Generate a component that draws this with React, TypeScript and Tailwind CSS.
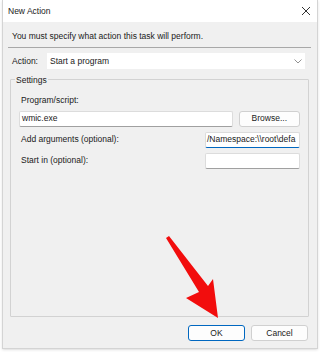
import React from 'react';

function Arrow() {
  return (
    <svg className="absolute left-0 top-0 pointer-events-none" width="320" height="352" viewBox="0 0 320 352">
      <polygon
        points="166,238 169,236 208,286 213,279 218,318 186,298 199,292"
        fill="#f20d0d"
      />
    </svg>
  );
}

function Field({ children, focused }: { children?: React.ReactNode; focused?: boolean }) {
  return (
    <div
      className={
        'h-[16px] bg-white border border-[#dcdcdc] rounded-[2px] flex items-center px-[2px] overflow-hidden whitespace-nowrap ' +
        (focused ? 'border-b-[#0067c0]' : 'border-b-[#a0a0a0]')
      }
    >
      {children}
    </div>
  );
}

export default function App() {
  return (
    <div className="relative w-[320px] h-[352px] bg-white text-[8.5px] text-[#1a1a1a] overflow-hidden" style={{ fontFamily: '"Liberation Sans", Arial, sans-serif' }}>
      <div className="ml-[2px] w-[316px] h-[349px] flex flex-col border border-t-0 border-[#d4d4d4] shadow-sm">
        {/* title bar */}
        <div className="h-[22px] bg-white flex items-center justify-between pl-[5px] pr-[6px]">
          <span>New Action</span>
          <svg width="10" height="10" viewBox="0 0 10 10">
            <path d="M1 1 L9 9 M9 1 L1 9" stroke="#333" strokeWidth="1" />
          </svg>
        </div>

        <div className="flex-1 bg-[#f0f0f0] flex flex-col px-[5px]">
          <div className="pl-[4px] pt-[8px] h-[25px]">You must specify what action this task will perform.</div>
          <div className="h-px bg-[#a8a8a8] mr-[1px]" />

          <div className="flex items-center mt-[5px] pl-[4px]">
            <span className="w-[35px]">Action:</span>
            <div className="w-[258px] h-[16px] bg-white flex items-center justify-between px-[3px]">
              <span>Start a program</span>
              <svg width="8" height="5" viewBox="0 0 8 5">
                <path d="M0.5 0.5 L4 4 L7.5 0.5" stroke="#777" fill="none" strokeWidth="0.8" />
              </svg>
            </div>
          </div>

          {/* Settings group */}
          <div className="relative mt-[10px] ml-[2px] mr-[3px] h-[238px] border border-[#d2d2d2] rounded-[1px]">
            <span className="absolute -top-[6px] left-[4px] bg-[#f0f0f0] px-[1px]">Settings</span>
            <div className="pt-[14px] pl-[8px] pr-[8px] flex flex-col">
              <div className="pl-[2px]">Program/script:</div>
              <div className="flex items-center mt-[4px] gap-[6px]">
                <div className="w-[216px]">
                  <Field>wmic.exe</Field>
                </div>
                <button className="w-[62px] h-[16px] bg-[#fdfdfd] border border-[#d0d0d0] rounded-[3px] flex items-center justify-center">
                  Browse...
                </button>
              </div>
              <div className="flex items-center mt-[5px] justify-between">
                <span className="pl-[2px]">Add arguments (optional):</span>
                <div className="w-[95px]">
                  <Field focused>
                    <span className="-ml-[1px]">/Namespace:\\root\defa</span>
                  </Field>
                </div>
              </div>
              <div className="flex items-center mt-[5px] justify-between">
                <span className="pl-[2px]">Start in (optional):</span>
                <div className="w-[95px]">
                  <Field />
                </div>
              </div>
            </div>
          </div>

          <div className="flex justify-end gap-[6px] mt-[8px] mr-[4px]">
            <button className="w-[57px] h-[16px] bg-[#fdfdfd] border border-[#0067c0] rounded-[3px] flex items-center justify-center">
              OK
            </button>
            <button className="w-[57px] h-[16px] bg-[#fdfdfd] border border-[#d0d0d0] rounded-[3px] flex items-center justify-center">
              Cancel
            </button>
          </div>
        </div>
      </div>
      <Arrow />
    </div>
  );
}
